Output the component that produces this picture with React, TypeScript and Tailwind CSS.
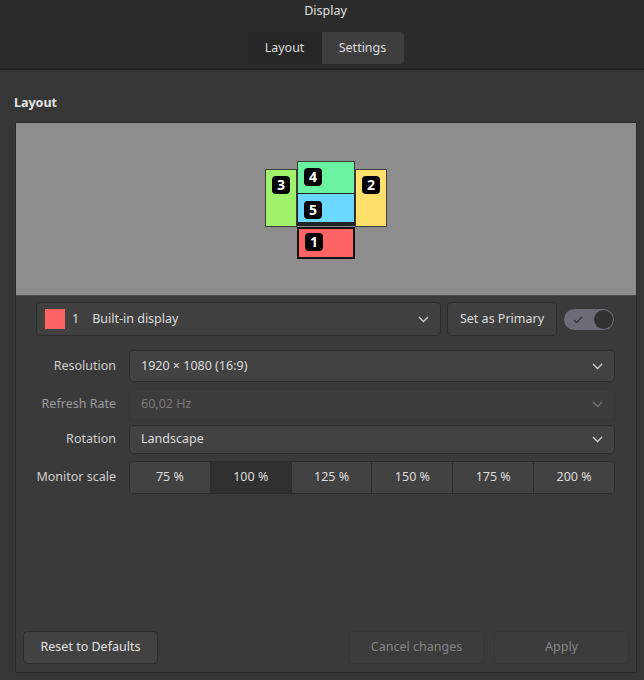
import { ReactNode } from 'react';

const font = { fontFamily: '"Noto Sans", "Open Sans", sans-serif' };

function Chevron({ dim = false }: { dim?: boolean }) {
  return (
    <svg width="11" height="7" viewBox="0 0 11 7" className={dim ? 'text-[#777]' : 'text-[#cfcfcf]'}>
      <path d="M1 1l4.5 4.5L10 1" fill="none" stroke="currentColor" strokeWidth="1.3" />
    </svg>
  );
}

function Monitor({
  n,
  className,
  badge,
}: {
  n: number;
  className: string;
  badge: string;
}) {
  return (
    <div className={`absolute ${className}`}>
      <div
        className={`absolute ${badge} flex h-[18px] w-[18px] items-center justify-center rounded-[4px] bg-black text-[14px] font-bold leading-none text-white`}
      >
        {n}
      </div>
    </div>
  );
}

function Row({ label, dim, children }: { label: string; dim?: boolean; children: ReactNode }) {
  return (
    <div className="flex items-center gap-[13px]">
      <div
        className={`w-[80px] shrink-0 whitespace-nowrap text-right text-[12.5px] ${
          dim ? 'text-[#9a9a9a]' : 'text-[#cfcfcf]'
        }`}
      >
        {label}
      </div>
      {children}
    </div>
  );
}

function Combo({ value, dim, h }: { value: string; dim?: boolean; h: string }) {
  return (
    <div
      className={`flex ${h} w-[486px] items-center justify-between rounded-[4px] border px-[11px] text-[12.5px] ${
        dim
          ? 'border-[#383838] bg-[#3c3c3c] text-[#7a7a7a]'
          : 'border-[#2c2c2c] bg-[#424242] text-[#dcdcdc]'
      }`}
    >
      <span>{value}</span>
      <Chevron dim={dim} />
    </div>
  );
}

export default function App() {
  const scales = ['75 %', '100 %', '125 %', '150 %', '175 %', '200 %'];
  return (
    <div className="flex h-[680px] w-[644px] flex-col bg-[#363636] text-[#dcdcdc]" style={font}>
      <div className="flex h-[70px] shrink-0 flex-col items-center border-b-2 border-[#232323] bg-[#2c2c2c] pl-[7px]">
        <div className="mt-[2px] text-[12.5px] leading-[18px] text-[#e0e0e0]">Display</div>
        <div className="mt-[12px] flex h-[32px] overflow-hidden rounded-[4px] text-[12.5px]">
          <div className="flex w-[74px] items-center justify-center bg-[#262626] text-[#dcdcdc]">Layout</div>
          <div className="flex w-[82px] items-center justify-center bg-[#3e3e3e] text-[#dcdcdc]">Settings</div>
        </div>
      </div>

      <div className="px-[14px] pt-[24px] text-[12.5px] font-bold leading-[18px] text-[#e4e4e4]">Layout</div>

      <div className="ml-[15px] mt-[10px] flex h-[551px] w-[622px] flex-col border border-[#2a2a2a] bg-[#3a3a3a]">
        <div className="relative h-[173px] shrink-0 border-b border-[#4a4a4a] bg-[#8d8d8d]">
          <Monitor n={3} className="left-[249px] top-[46px] h-[58px] w-[32px] border border-[#3a3a3a] bg-[#9ff26a]" badge="left-[6px] top-[6px]" />
          <Monitor n={4} className="left-[281px] top-[38px] h-[33px] w-[58px] border border-[#3a3a3a] bg-[#6bf2a0]" badge="left-[6px] top-[6px]" />
          <Monitor n={5} className="left-[281px] top-[70px] h-[33px] w-[58px] border border-b-4 border-[#222] bg-[#6ad8ff]" badge="left-[6px] top-[7px]" />
          <Monitor n={2} className="left-[339px] top-[46px] h-[58px] w-[32px] border border-[#3a3a3a] bg-[#ffe06a]" badge="left-[6px] top-[6px]" />
          <Monitor n={1} className="left-[281px] top-[104px] h-[32px] w-[58px] border-2 border-[#111] bg-[#ff6464]" badge="left-[6px] top-[4px]" />
        </div>

        <div className="flex flex-1 flex-col px-[20px]">
          <div className="mt-[6px] flex h-[34px] items-center">
            <div className="flex h-full w-[405px] items-center justify-between rounded-[4px] border border-[#2c2c2c] bg-[#404040] pl-[8px] pr-[11px] text-[12.5px]">
              <div className="flex items-center">
                <div className="h-[20px] w-[20px] bg-[#ff6464]" />
                <span className="ml-[7px]">1</span>
                <span className="ml-[13px]">Built-in display</span>
              </div>
              <Chevron />
            </div>
            <div className="ml-[6px] flex h-full w-[110px] items-center justify-center rounded-[4px] border border-[#2c2c2c] bg-[#404040] text-[12.5px]">
              Set as Primary
            </div>
            <div className="relative ml-[7px] h-[21px] w-[50px] rounded-full bg-[#6c6c76]">
              <svg width="10" height="8" viewBox="0 0 10 8" className="absolute left-[9px] top-[7px]">
                <path d="M1 4l2.5 2.5L9 1" fill="none" stroke="#2f3340" strokeWidth="1.4" />
              </svg>
              <div className="absolute right-[1px] top-[1px] h-[19px] w-[19px] rounded-full bg-[#323232]" />
            </div>
          </div>

          <div className="mt-[14px] flex flex-col gap-[7px]">
            <Row label="Resolution">
              <Combo value="1920 × 1080 (16:9)" h="h-[32px]" />
            </Row>
            <Row label="Refresh Rate" dim>
              <Combo value="60,02 Hz" dim h="h-[31px]" />
            </Row>
            <div className="-mt-[2px]">
              <Row label="Rotation">
                <Combo value="Landscape" h="h-[29px]" />
              </Row>
            </div>
            <Row label="Monitor scale">
              <div className="flex h-[33px] w-[486px] overflow-hidden rounded-[4px] border border-[#2c2c2c] text-[12.5px]">
                {scales.map((s, i) => (
                  <div
                    key={s}
                    className={`flex flex-1 items-center justify-center ${i > 0 ? 'border-l border-[#2c2c2c]' : ''} ${
                      i === 1 ? 'bg-[#303030]' : 'bg-[#424242]'
                    }`}
                  >
                    {s}
                  </div>
                ))}
              </div>
            </Row>
          </div>

          <div className="mt-auto mb-[8px] -mx-[13px] flex h-[33px] items-stretch text-[12.5px]">
            <div className="flex w-[135px] items-center justify-center rounded-[4px] border border-[#2c2c2c] bg-[#424242] text-[#e0e0e0]">
              Reset to Defaults
            </div>
            <div className="ml-auto flex w-[135px] items-center justify-center rounded-[4px] border border-[#363636] bg-[#3c3c3c] text-[#858585]">
              Cancel changes
            </div>
            <div className="ml-[10px] flex w-[135px] items-center justify-center rounded-[4px] border border-[#363636] bg-[#3c3c3c] text-[#858585]">
              Apply
            </div>
          </div>
        </div>
      </div>
    </div>
  );
}
